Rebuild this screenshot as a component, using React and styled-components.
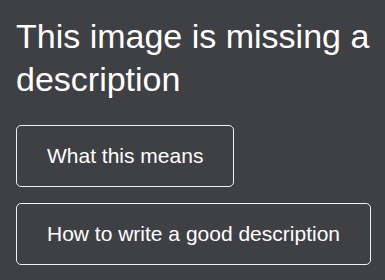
import styled, { createGlobalStyle } from "styled-components";

const GlobalStyle = createGlobalStyle`
    html, body {
        margin: 0;
        padding: 0;
        background: #3f4044;
    }
    body {
        font-family: "Liberation Sans", Arial, sans-serif;
    }
`

const Panel = styled.div`
    width: 385px;
    height: 280px;
    box-sizing: border-box;
    padding: 15px 8px 16px 16px;
    background: #3f4044;
    color: #ffffff;
    display: flex;
    flex-direction: column;
    align-items: flex-start;
`

const Title = styled.h1`
    margin: 0 0 24px;
    font-size: 34px;
    line-height: 43px;
    font-weight: normal;
`

const Actions = styled.div`
    display: flex;
    flex-direction: column;
    align-items: flex-start;
    gap: 16px;
`

const LinkButton = styled.button`
    box-sizing: border-box;
    height: 62px;
    padding: 0 30px;
    background: transparent;
    color: #ffffff;
    border: 1px solid #f0f0f0;
    border-radius: 5px;
    font-family: "Liberation Sans", Arial, sans-serif;
    font-size: 21px;
    white-space: nowrap;
    cursor: pointer;
`

const App = () => {
    return <>
        <GlobalStyle />
        <Panel>
            <Title>This image is missing a description</Title>
            <Actions>
                <LinkButton>What this means</LinkButton>
                <LinkButton>How to write a good description</LinkButton>
            </Actions>
        </Panel>
    </>;
};

export default App;
